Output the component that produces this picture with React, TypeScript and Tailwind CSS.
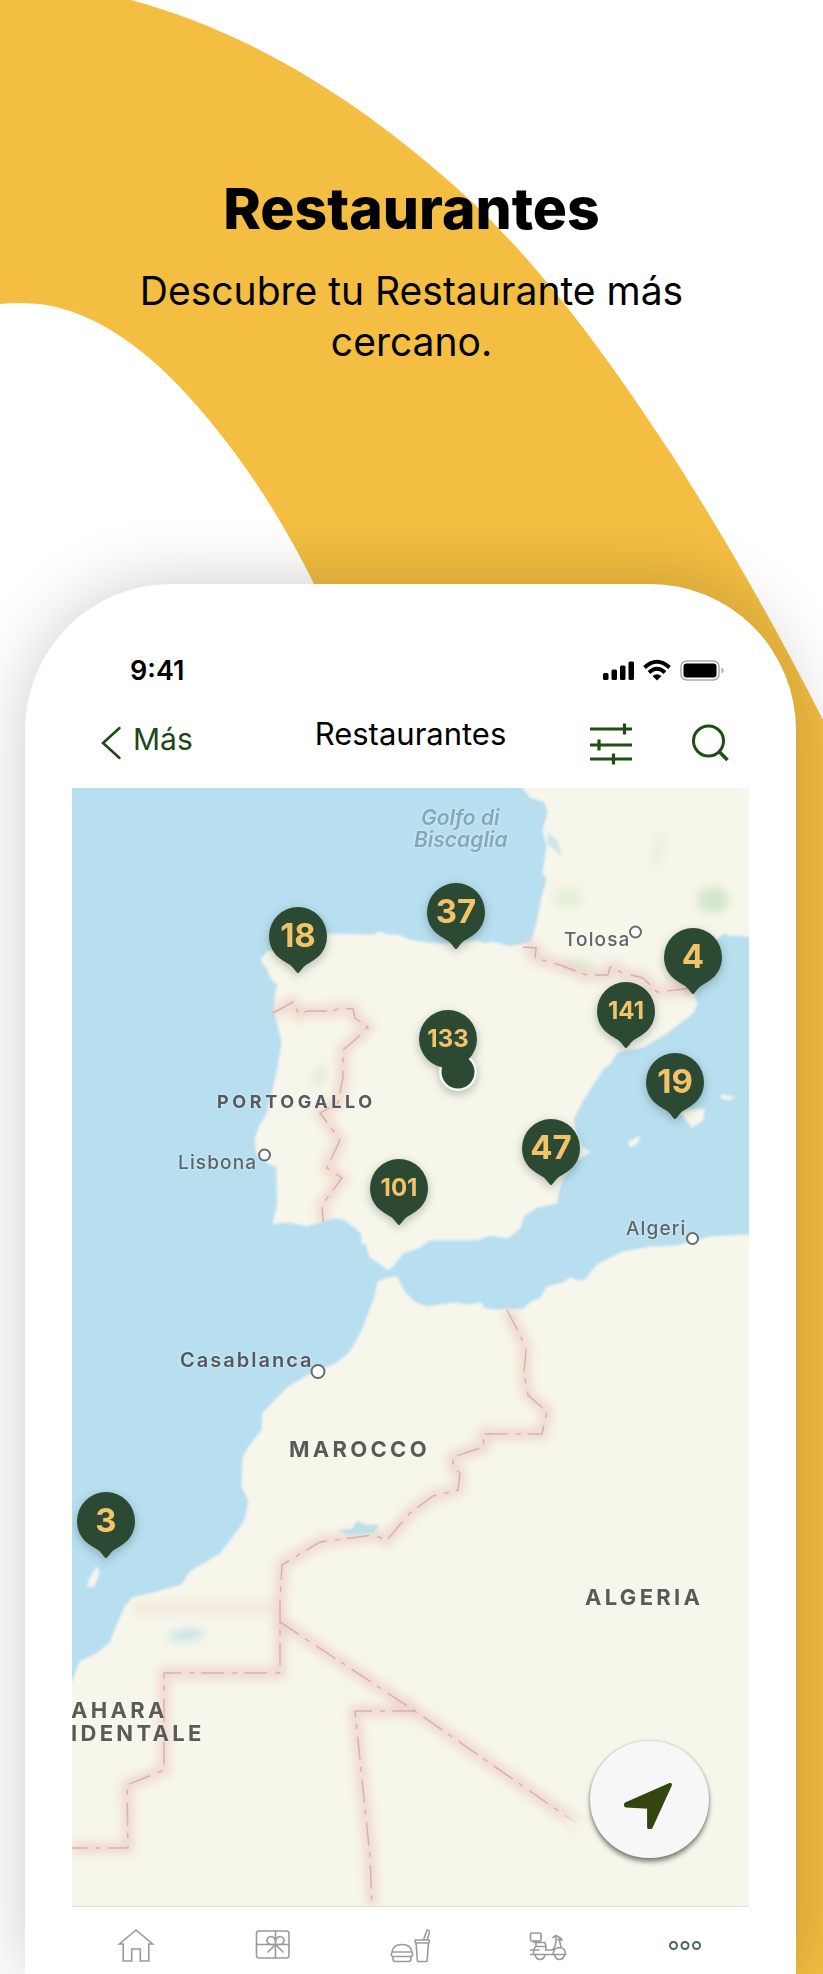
import React from "react";

const MAP_W = 677;
const MAP_H = 1118;

type Pin = { count: number; x: number; y: number; plain?: boolean };

const pins: Pin[] = [
  { count: 18, x: 226, y: 119 },
  { count: 37, x: 384, y: 95 },
  { count: 4, x: 621, y: 140 },
  { count: 141, x: 554, y: 194 },
  { count: 133, x: 376, y: 222, plain: true },
  { count: 19, x: 603, y: 265 },
  { count: 47, x: 479, y: 331 },
  { count: 101, x: 327, y: 371 },
  { count: 3, x: 34, y: 704 },
];

const sea = "text-[21px] leading-6 font-semibold italic text-[#83a8be]";
const country = "text-[22px] leading-6 font-bold tracking-[0.15em] text-[#5b5a58]";
const city = "text-[19px] leading-6 font-medium tracking-[0.06em] text-[#5d6468]";

const labels = [
  { text: "Golfo di", x: 349, y: 30, cls: sea },
  { text: "Biscaglia", x: 342, y: 52, cls: sea },
  { text: "Tolosa", x: 492, y: 152, cls: city },
  { text: "PORTOGALLO", x: 145, y: 314, cls: "text-[18px] leading-6 font-bold tracking-[0.2em] text-[#575a60]" },
  { text: "Lisbona", x: 106, y: 375, cls: city },
  { text: "Algeri", x: 554, y: 441, cls: city },
  { text: "Casablanca", x: 108, y: 572, cls: "text-[20px] leading-6 font-semibold tracking-[0.1em] text-[#54595c]" },
  { text: "MAROCCO", x: 217, y: 661, cls: country },
  { text: "ALGERIA", x: 513, y: 809, cls: country },
  { text: "AHARA", x: -1, y: 922, cls: country },
  { text: "IDENTALE", x: -1, y: 945, cls: country },
];

const borders = [
  "M273 1013L293 1002L299 1015L307 1011H333L340 1008L353 1009L355 1018L368 1027L355 1040L343 1050V1077L338 1103L320 1113L340 1140L327 1168L342 1178L322 1205L323 1222",
  "M523 947L536 948L535 958L560 965L573 970L587 975H608L610 967L623 973L643 978L657 992L693 988",
  "M507 1310L520 1335L526 1350L524 1373L528 1395L547 1412L542 1434H483L484 1447L453 1457V1467L460 1473L458 1490L433 1496L410 1513L387 1540L373 1535L320 1542L282 1565L280 1600V1673H164V1770L127 1785L128 1848H72",
  "M280 1622L415 1711L583 1828",
  "M415 1711H355L370 1857L372 1906",
];

function Landscape() {
  return (
    <svg viewBox="72 788 677 1118" className="block h-auto w-full bg-[#b7dfef]" aria-hidden="true">
      <defs>
        <filter id="glow" x="-20%" y="-20%" width="140%" height="140%">
          <feGaussianBlur stdDeviation="4.500" />
        </filter>
        <filter id="coast" x="-5%" y="-5%" width="110%" height="110%">
          <feGaussianBlur stdDeviation="1" />
        </filter>
      </defs>
      <g fill="#f6f6ea" stroke="#eef0f0" strokeWidth="1.5" strokeLinejoin="round" filter="url(#coast)">
        <path d="M520 780L523 788L530 797L545 802L548 813L543 830L547 847L543 873L547 880L542 897L537 923L532 940Q529 944 525 943Q515 947 507 946L493 942L485 944L477 941L443 944L427 943L410 940L397 935L388 935L380 932L373 935L330 934L300 938L267 952L261 960L268 970L271 978L278 985L275 997L275 1013L282 1042L278 1067L273 1090L268 1110Q265 1120 260 1125L255 1140L257 1155L268 1163L277 1167L277 1187L278 1203L273 1224Q283 1221 293 1223L307 1226L323 1221Q333 1216 343 1219L357 1229L362 1234L362 1243L366 1244L370 1257L387 1269Q392 1269 395 1263L403 1253L418 1248L430 1240L477 1240L490 1235L508 1238L520 1228L523 1217L537 1207L557 1203L558 1193L563 1177L577 1160L590 1152L582 1147L576 1132L573 1120L583 1100L596 1080L604 1068L611 1063L617 1052L643 1047L667 1033L693 1013L697 1003L693 993L705 950L718 938L724 933L730 935L760 937V780Z" />
        <path d="M760 1234L710 1237L677 1246L650 1247L623 1252L597 1265L585 1280L578 1281L570 1278L563 1283L547 1287L540 1299L533 1301L523 1309L493 1310L484 1308L481 1303L468 1305L453 1303L427 1307L416 1303L405 1293L397 1277L388 1278L378 1282L375 1297L365 1323Q358 1340 350 1352L337 1363L307 1376L287 1388L263 1413L262 1430L248 1448L243 1458L242 1487L249 1501L245 1520L238 1531L220 1554L190 1572L182 1585L153 1593L132 1598L125 1607L117 1625L110 1643L96 1654L80 1662L72 1682L60 1700V1920H760Z" />
        <path d="M681 1112L690 1110L704 1109L703 1120L692 1127Z" />
        <path d="M629 1142L640 1136L637 1144L630 1147Z" />
        <path d="M722 1095L734 1097L730 1100L721 1098Z" />
        <path d="M97 1567L99 1573L94 1586L88 1587L89 1580Z" />
      </g>
      <g filter="url(#glow)">
        <g fill="#d2e6cd">
          <ellipse cx="713" cy="900" rx="16" ry="13" />
          <ellipse cx="568" cy="897" rx="14" ry="11" opacity=".45" />
          <ellipse cx="658" cy="850" rx="6" ry="18" opacity=".3" transform="rotate(15 658 850)" />
          <ellipse cx="577" cy="965" rx="18" ry="6" opacity=".7" />
          <ellipse cx="320" cy="1076" rx="6" ry="11" opacity=".6" transform="rotate(25 320 1076)" />
        </g>
        <ellipse cx="186" cy="1635" rx="18" ry="5" fill="#bfe2ea" transform="rotate(-8 186 1635)" />
        <g fill="none" stroke="#efc6c2" strokeWidth="12" strokeOpacity=".6" strokeLinejoin="round">
          {borders.map((d) => (
            <path key={d} d={d} />
          ))}
          <path d="M135 1608H280" strokeOpacity=".3" />
        </g>
      </g>
      <g fill="#bcdfe8" filter="url(#coast)">
        <path d="M337 1530L352 1529L357 1521L366 1525L379 1525L374 1533L348 1535Z" />
        <path d="M548 832L558 842L562 858L555 850L547 844Z" opacity=".7" />
      </g>
      <g fill="none" stroke="#c9a9a8" strokeWidth="1.5" strokeOpacity=".8" strokeDasharray="23 7 5 8">
        {borders.map((d) => (
          <path key={d} d={d} />
        ))}
      </g>
      <path d="M560 1816L590 1820V1850Z" fill="#f6f6ea" filter="url(#glow)" />
      <g fill="#fff" stroke="#666b6e" strokeWidth="2">
        <circle cx="264.5" cy="1155" r="5.5" />
        <circle cx="635.5" cy="932" r="5.5" />
        <circle cx="692.5" cy="1238.5" r="5.5" />
        <circle cx="318" cy="1371.5" r="6.5" />
      </g>
    </svg>
  );
}

function PinButton({ pin }: { pin: Pin }) {
  return (
    <button
      type="button"
      aria-label={`${pin.count} restaurantes`}
      className="absolute h-[66px] w-[58px] -translate-x-1/2"
      style={{ left: `${(pin.x / MAP_W) * 100}%`, top: `${(pin.y / MAP_H) * 100}%` }}
    >
      <svg viewBox="0 0 58 66" className="absolute inset-0 size-full overflow-visible drop-shadow-[0_3px_5px_rgba(40,50,45,0.3)]" aria-hidden="true">
        {pin.plain ? (
          <>
            <circle cx="39" cy="62" r="19" fill="#f4faf3" />
            <circle cx="29" cy="29" r="29" fill="#2c4934" />
            <circle cx="39" cy="62" r="16.5" fill="#2c4934" />
          </>
        ) : (
          <path d="M29 0A29 29 0 0 1 58 29C58 42 51 50 41 55.5C35 58.500 33 62 30 65.500Q29 66.500 28 65.500C25 62 23 58.500 17 55.500C7 50 0 42 0 29A29 29 0 0 1 29 0Z" fill="#2c4934" />
        )}
      </svg>
      <span
        className={
          pin.count > 99
            ? "relative block h-[66px] text-[24px] leading-[58px] font-bold text-[#f1c46a]"
            : "relative block h-[66px] text-[33px] leading-[56px] font-bold text-[#f1c46a]"
        }
      >
        {pin.count}
      </span>
    </button>
  );
}

function TabIcon({ children }: { children: React.ReactNode }) {
  return (
    <svg viewBox="0 0 40 36" className="h-9 w-10" fill="none" stroke="#9a9a9a" strokeWidth="1.6" strokeLinejoin="round" strokeLinecap="round" aria-hidden="true">
      {children}
    </svg>
  );
}

const tabs = [
  {
    name: "Inicio",
    icon: (
      <TabIcon>
        <path d="M20 2L3.500 16H7.200V33H15.700V21H24.300V33H32.800V16H36.500Z" strokeLinejoin="miter" />
      </TabIcon>
    ),
  },
  {
    name: "Regalos",
    icon: (
      <TabIcon>
        <rect x="3.500" y="3" width="32.500" height="27" rx="2.500" />
        <path d="M22.500 3V30M3.500 16.500H36M22.500 16.500L15 24M22.500 16.500L30 24" />
        <path d="M22.500 16.500H17.500Q14 15.500 14 12.500Q14 9 18 8.500Q22 9 22.500 13.500Q23 9 27 8.500Q31 9 31 12.500Q31 15.500 27.500 16.500Z" />
      </TabIcon>
    ),
  },
  {
    name: "Menú",
    icon: (
      <TabIcon>
        <path d="M2 24Q3 16.500 12 16.500Q21 16.500 22 24ZM2.500 24Q0 26.500 2.500 28.500H21.500Q24 26.500 21.500 24M3 28.500V31Q3 33.500 5.500 33.500H18.500Q21 33.500 21 31V28.500" />
        <path d="M26 15L27.500 33.500H37L38.500 15M25.500 12H39Q40 13.500 39 15H25.500Q24.500 13.500 25.500 12ZM33.500 12L37 2L40 3L37 12" />
      </TabIcon>
    ),
  },
  {
    name: "A domicilio",
    icon: (
      <TabIcon>
        <path d="M3.500 5Q2.500 5 2.500 6V12Q2.500 13 3.500 13H12Q13 13 13 12V6Q13 5 12 5ZM5 13.500L7 14.500H17L18 18.500H9M8 15V18.500Q5.500 20 5.500 25.500M18 18.500L17.500 22H24Q28.500 19.500 28 8.500M25 9.500L28 7.500L32.500 10L34 12H30M31 10.500L33 19M2.500 22H11M2.500 26.500H37.500Q37.500 19.500 31 19.500Q25.500 20 25 26.500" />
        <path d="M7 26.500Q8 31.500 12 31.500Q16 31.500 17 26.500M26.500 26.500Q27.500 31.500 31.500 31.500Q35.500 31.500 36.500 26.500" />
      </TabIcon>
    ),
  },
  {
    name: "Más",
    icon: (
      <svg viewBox="0 0 40 36" className="h-9 w-10" fill="none" stroke="#47695a" strokeWidth="2" aria-hidden="true">
        <circle cx="8.500" cy="17.500" r="3.500" />
        <circle cx="20" cy="17.500" r="3.500" />
        <circle cx="31.500" cy="17.500" r="3.500" />
      </svg>
    ),
  },
];

export default function App() {
  return (
    <main className="relative overflow-hidden bg-white font-['Inter',sans-serif] text-black">
      <svg viewBox="0 0 823 1974" className="absolute inset-x-0 top-0 h-auto w-full" aria-hidden="true">
        <path
          d="M0 0H131C235 28 335 84 436 170C520 240 590 330 672 455C725 538 775 625 823 720V1974H400L314 584C275 505 230 440 178 385C130 335 75 302 20 303Q10 303 0 304Z"
          fill="#f3be41"
        />
      </svg>

      <header className="relative px-[110px] pt-[177px] text-center">
        <h1 className="text-[57px] leading-[64px] font-extrabold">Restaurantes</h1>
        <p className="mt-6 text-[39px] leading-[51px]">Descubre tu Restaurante más cercano.</p>
      </header>

      <section className="relative mt-[217px] mr-[27px] ml-[25px] rounded-t-[146px] bg-white px-[47px] pt-[68px] shadow-[0_0_70px_rgba(0,0,0,0.2)]">
        <div className="flex h-[38px] items-center justify-between pr-[25px] pl-[58px]">
          <span className="text-[27px] leading-[38px] font-semibold">9:41</span>
          <svg viewBox="0 0 122 24" className="h-6 w-[122px]" aria-hidden="true">
            <rect x="1" y="14" width="5.500" height="7" rx="1.500" />
            <rect x="9.500" y="10.500" width="5.500" height="10.500" rx="1.500" />
            <rect x="18" y="6.500" width="5.500" height="14.500" rx="1.500" />
            <rect x="26.500" y="2.500" width="5.500" height="18.500" rx="1.500" />
            <g fill="none" stroke="#000" strokeWidth="3.800">
              <path d="M42.500 8.500Q55 -3 67.500 8.500" />
              <path d="M47 13.500Q55 6 63 13.500" />
            </g>
            <path d="M50.500 17Q55 13.500 59.500 17L55 21.500Z" />
            <rect x="79" y="2" width="38" height="19" rx="5.500" fill="none" stroke="#aaa" strokeWidth="1.500" />
            <rect x="81.500" y="4.500" width="33" height="14" rx="3" />
            <path d="M119.500 8.500Q124 11.500 119.500 14.500Z" fill="#aaa" />
          </svg>
        </div>

        <nav className="grid h-[98px] grid-cols-[1fr_auto_1fr] items-center" aria-label="Restaurantes">
          <button type="button" className="flex items-center gap-[11px] pl-7 text-[#1d4716]">
            <svg viewBox="0 0 22 36" className="mt-2 h-9 w-[22px]" fill="none" stroke="currentColor" strokeWidth="2.500" strokeLinecap="round" aria-hidden="true">
              <path d="M19.500 3L3 18L19.500 33" />
            </svg>
            <span className="text-[30px] leading-9">Más</span>
          </button>
          <h2 className="pb-2.5 text-[31px] leading-9">Restaurantes</h2>
          <div className="flex items-center justify-end gap-[58px] pt-2 pr-5 text-[#1d4f14]">
            <button type="button" aria-label="Filtros">
              <svg viewBox="0 0 44 44" className="block size-11" fill="none" stroke="currentColor" strokeWidth="3.200" aria-hidden="true">
                <path d="M1 8H43M1 24H43M1 38H43M35.500 2.500V13.500M10 18.500V29.500M24.500 32.500V43.500" />
              </svg>
            </button>
            <button type="button" aria-label="Buscar">
              <svg viewBox="0 0 38 44" className="block h-11 w-[38px]" fill="none" stroke="currentColor" strokeWidth="3" aria-hidden="true">
                <circle cx="17.500" cy="20" r="15" />
                <path d="M28 30.500L36.500 39" strokeWidth="3.500" />
              </svg>
            </button>
          </div>
        </nav>

        <div className="relative overflow-hidden border-b border-[#e0dfd6]">
          <Landscape />
          {labels.map((label) => (
            <span
              key={label.text}
              className="absolute -translate-y-1/2 whitespace-nowrap [text-shadow:0_0_3px_rgba(255,255,255,0.7)]"
              style={{ left: `${(label.x / MAP_W) * 100}%`, top: `${(label.y / MAP_H) * 100}%` }}
            >
              <span className={`block ${label.cls}`}>{label.text}</span>
            </span>
          ))}
          {pins.map((pin) => (
            <PinButton key={pin.count} pin={pin} />
          ))}
          <button
            type="button"
            aria-label="Mi ubicación"
            className="absolute right-10 bottom-12 flex h-[117px] w-[119px] items-center justify-center rounded-full bg-[#f7f7f7] shadow-[0_4px_5px_rgba(0,0,0,0.45),0_0_3px_rgba(0,0,0,0.25)]"
          >
            <svg viewBox="0 0 54 52" className="mt-3 mr-1 h-12 w-[50px]" fill="#354510" stroke="#354510" strokeWidth="4" strokeLinejoin="round" aria-hidden="true">
              <path d="M51 3L3 24V25.500L28 27V49H30Z" />
            </svg>
          </button>
        </div>

        <nav className="-mx-[5px] grid h-[67px] grid-cols-5 pt-2.5" aria-label="Secciones">
          {tabs.map((tab) => (
            <button key={tab.name} type="button" aria-label={tab.name} className="flex items-center justify-center">
              {tab.icon}
            </button>
          ))}
        </nav>
      </section>
    </main>
  );
}
